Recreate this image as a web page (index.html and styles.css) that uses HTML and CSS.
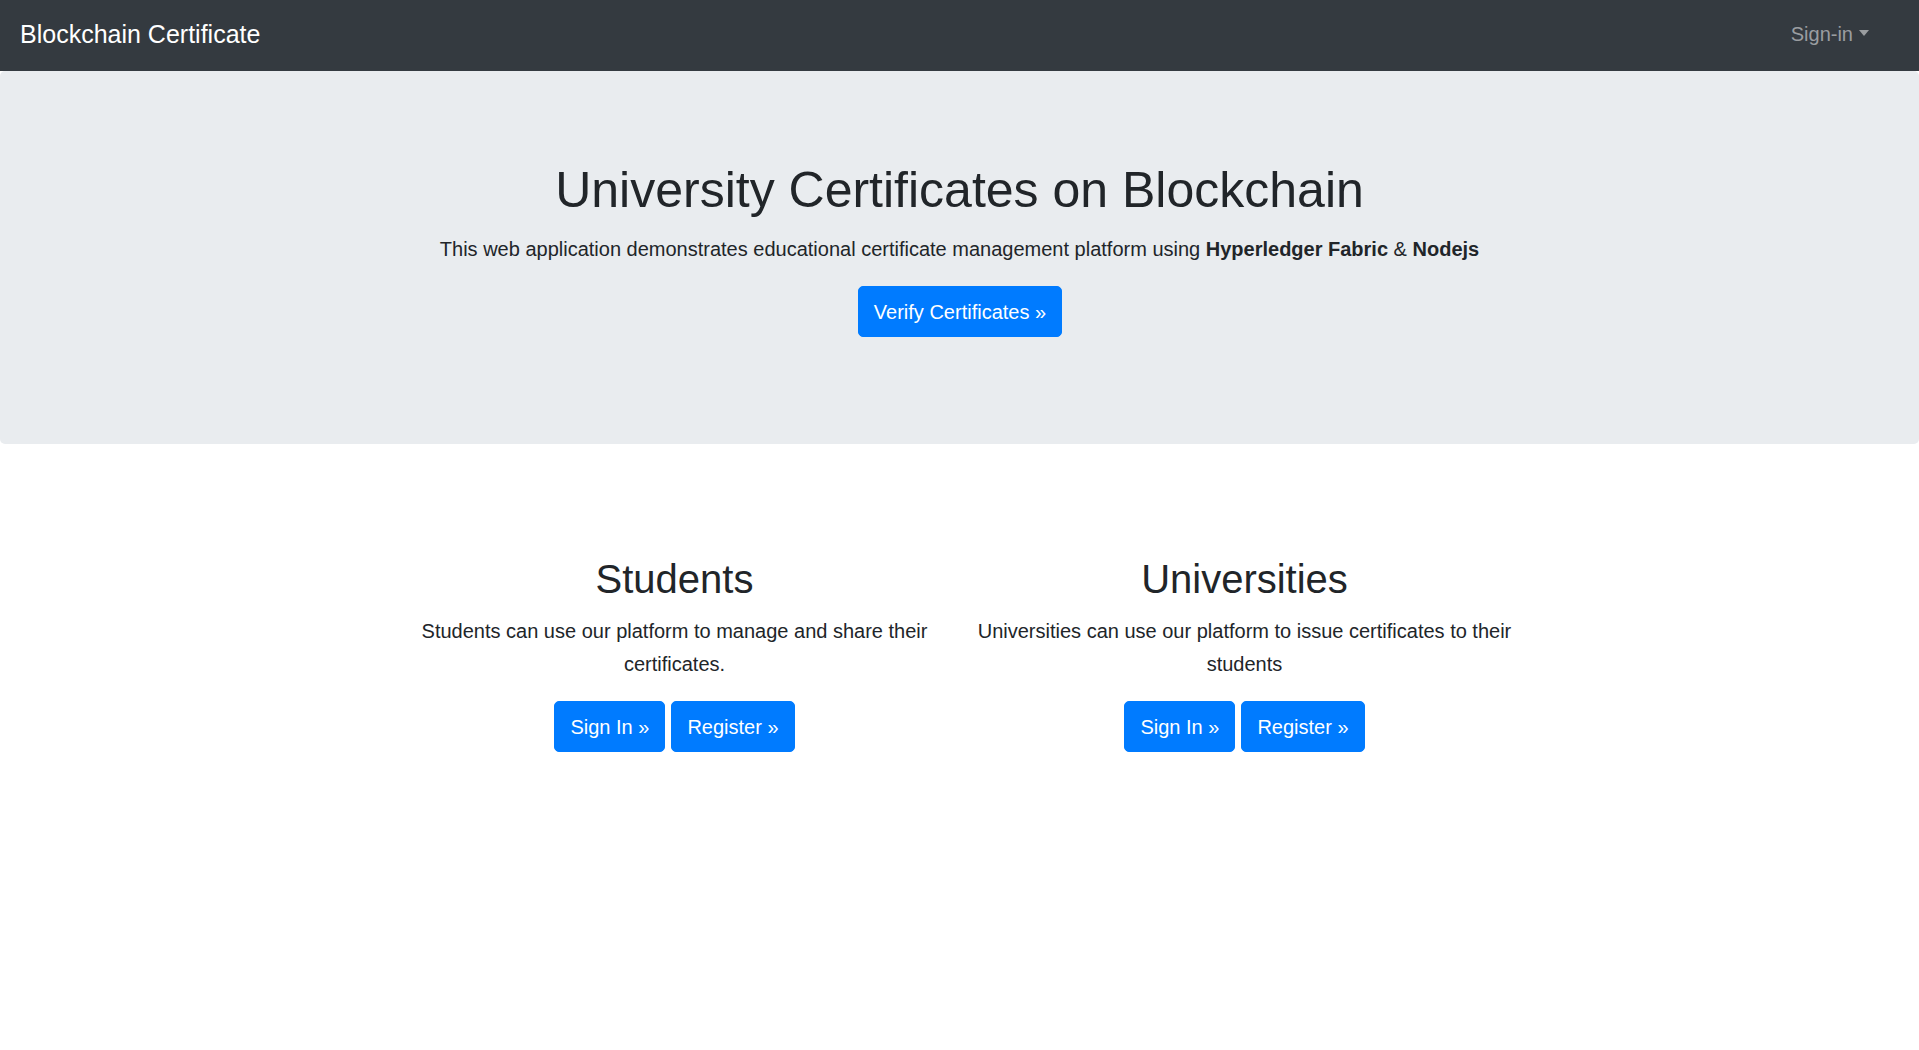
FILE: index.html
```html
<!DOCTYPE html>
<html lang="en">
<head>
<meta charset="utf-8">
<title>Blockchain Certificate</title>
<link rel="stylesheet" href="styles.css">
</head>
<body>
<nav class="navbar">
  <a class="brand" href="#">Blockchain Certificate</a>
  <a class="nav-link" href="#">Sign-in<span class="caret"></span></a>
</nav>
<header class="jumbotron">
  <h1 class="display">University Certificates on Blockchain</h1>
  <p class="lead">This web application demonstrates educational certificate management platform using <b>Hyperledger Fabric</b> &amp; <b>Nodejs</b></p>
  <div class="actions">
    <a class="btn" href="#">Verify Certificates »</a>
  </div>
</header>
<main class="container">
  <section class="col">
    <h2>Students</h2>
    <p>Students can use our platform to manage and share their certificates.</p>
    <div class="actions">
      <a class="btn" href="#">Sign In »</a>
      <a class="btn" href="#">Register »</a>
    </div>
  </section>
  <section class="col">
    <h2>Universities</h2>
    <p>Universities can use our platform to issue certificates to their students</p>
    <div class="actions">
      <a class="btn" href="#">Sign In »</a>
      <a class="btn" href="#">Register »</a>
    </div>
  </section>
</main>
</body>
</html>
```

FILE: styles.css
```css
* { box-sizing: border-box; }

html, body {
  margin: 0;
  padding: 0;
  background: #fff;
  color: #212529;
  font-family: "Liberation Sans", Arial, sans-serif;
  font-size: 20px;
}

a { text-decoration: none; }

.navbar {
  height: 71px;
  background: #343a40;
  display: flex;
  align-items: center;
  justify-content: space-between;
  padding: 0 50px 2px 20px;
}

.brand {
  color: #fff;
  font-size: 25px;
  line-height: 37px;
}

.nav-link {
  color: #9a9da0;
  font-size: 20px;
  line-height: 30px;
  display: flex;
  align-items: center;
  margin-bottom: 2px;
}

.caret {
  display: inline-block;
  margin-left: 6px;
  width: 0;
  height: 0;
  border-top: 6px solid #9a9da0;
  border-left: 5.5px solid transparent;
  border-right: 5.5px solid transparent;
  margin-top: -2px;
}

.jumbotron {
  background: #e9ecef;
  border-radius: 5px;
  padding: 89px 0 107px;
  text-align: center;
}

.display {
  font-size: 50px;
  line-height: 60px;
  font-weight: 400;
  margin: 0 0 14px;
}

.lead {
  font-size: 20px;
  line-height: 30px;
  margin: 0 0 22px;
}

.lead b { font-weight: 700; }

.actions {
  display: flex;
  justify-content: center;
  gap: 6px;
}

.jumbotron .actions { padding-left: 1px; }

.btn {
  display: inline-flex;
  align-items: center;
  height: 51px;
  padding: 0 15px;
  border: 1px solid #007bff;
  border-radius: 5px;
  background: #007bff;
  color: #fff;
  font-size: 20px;
  line-height: 30px;
}

.container {
  width: 1140px;
  margin: 0 auto;
  padding-top: 111px;
  display: grid;
  grid-template-columns: 1fr 1fr;
}

.col {
  padding: 0 15px;
  text-align: center;
}

.col h2 {
  font-size: 40px;
  line-height: 48px;
  font-weight: 400;
  margin: 0 0 12px;
}

.col p {
  font-size: 20px;
  line-height: 33px;
  margin: 0 0 20px;
}
```
